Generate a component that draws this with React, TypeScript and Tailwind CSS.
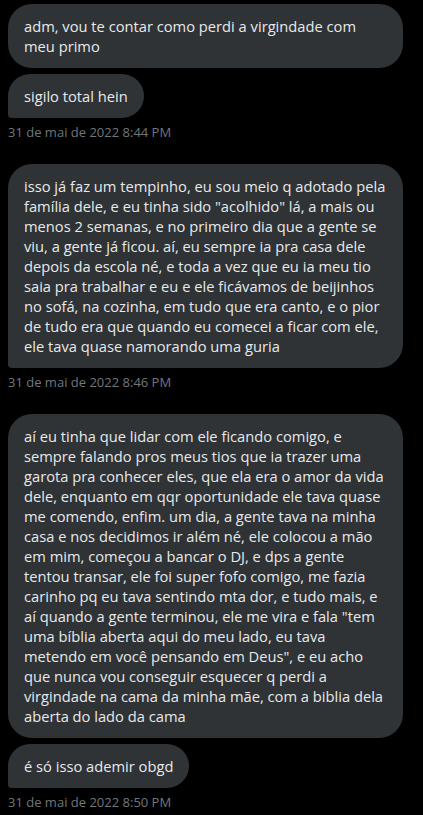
import React from "react";

const Bubble = ({ lines, wide, tail }: { lines: string[]; wide?: boolean; tail?: boolean }) => (
  <div
    className={
      "rounded-[24px] bg-[#2f3336] px-4 py-3 text-[14.7px] leading-5 text-[#e7e9ea] whitespace-nowrap " +
      (wide ? "w-[395px] " : "w-fit ") +
      (tail ? "rounded-bl-[4px]" : "")
    }
  >
    {lines.map((l, i) => (
      <div key={i}>{l}</div>
    ))}
  </div>
);

const Stamp = ({ t }: { t: string }) => (
  <div className="mt-[6px] text-[13px] leading-4 text-[#71767b]">{t}</div>
);

export default function App() {
  return (
    <div className="min-h-[815px] bg-black px-2 pt-1 font-['Open_Sans',sans-serif]">
      <Bubble wide lines={["adm, vou te contar como perdi a virgindade com", "meu primo"]} />
      <div className="mt-[6px]">
        <Bubble tail lines={["sigilo total hein"]} />
      </div>
      <Stamp t="31 de mai de 2022 8:44 PM" />
      <div className="mt-6">
        <Bubble
          wide
          tail
          lines={[
            "isso já faz um tempinho, eu sou meio q adotado pela",
            "família dele, e eu tinha sido \"acolhido\" lá, a mais ou",
            "menos 2 semanas, e no primeiro dia que a gente se",
            "viu, a gente já ficou. aí, eu sempre ia pra casa dele",
            "depois da escola né, e toda a vez que eu ia meu tio",
            "saia pra trabalhar e eu e ele ficávamos de beijinhos",
            "no sofá, na cozinha, em tudo que era canto, e o pior",
            "de tudo era que quando eu comecei a ficar com ele,",
            "ele tava quase namorando uma guria",
          ]}
        />
      </div>
      <Stamp t="31 de mai de 2022 8:46 PM" />
      <div className="mt-6">
        <Bubble
          wide
          lines={[
            "aí eu tinha que lidar com ele ficando comigo, e",
            "sempre falando pros meus tios que ia trazer uma",
            "garota pra conhecer eles, que ela era o amor da vida",
            "dele, enquanto em qqr oportunidade ele tava quase",
            "me comendo, enfim. um dia, a gente tava na minha",
            "casa e nos decidimos ir além né, ele colocou a mão",
            "em mim, começou a bancar o DJ, e dps a gente",
            "tentou transar, ele foi super fofo comigo, me fazia",
            "carinho pq eu tava sentindo mta dor, e tudo mais, e",
            "aí quando a gente terminou, ele me vira e fala \"tem",
            "uma bíblia aberta aqui do meu lado, eu tava",
            "metendo em você pensando em Deus\", e eu acho",
            "que nunca vou conseguir esquecer q perdi a",
            "virgindade na cama da minha mãe, com a biblia dela",
            "aberta do lado da cama",
          ]}
        />
      </div>
      <div className="mt-[6px]">
        <Bubble tail lines={["é só isso ademir obgd"]} />
      </div>
      <Stamp t="31 de mai de 2022 8:50 PM" />
    </div>
  );
}
